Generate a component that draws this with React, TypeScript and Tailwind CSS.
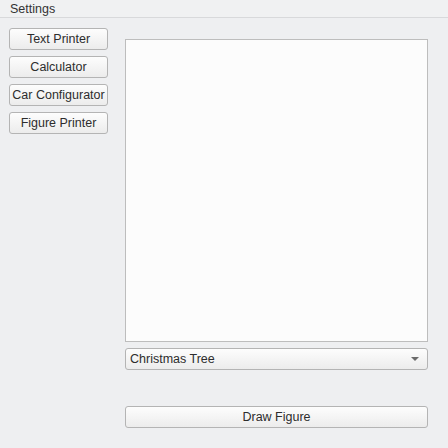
import React from "react";

const btn =
  "h-[22px] rounded-[3px] border border-[#b4b4b4] bg-gradient-to-b from-[#fdfdfd] to-[#ececec] text-[12.5px] text-[#2d2d2d] flex items-center justify-center";

export default function App() {
  return (
    <div className="w-[448px] h-[448px] bg-[#eeeff1] font-['Liberation_Sans',Arial,sans-serif] flex flex-col">
      {/* Title bar */}
      <div className="h-[18px] border-b border-[#d8d9db] bg-[#f0f1f2] px-[10px] text-[12.5px] text-[#333] leading-[18px]">
        Settings
      </div>

      <div className="flex flex-1">
        {/* Left nav */}
        <div className="w-[125px] flex flex-col gap-[6px] pt-[10px] pl-[9px]">
          {["Text Printer", "Calculator", "Car Configurator", "Figure Printer"].map((t) => (
            <button key={t} className={btn + " w-[99px]"}>
              {t}
            </button>
          ))}
        </div>

        {/* Main */}
        <div className="flex flex-col pt-[21px] w-[303px]">
          <div className="h-[303px] border border-[#bdbdbd] bg-[#fcfcfc]" />
          <div className="mt-[6px] h-[22px] rounded-[3px] border border-[#b4b4b4] bg-gradient-to-b from-[#fdfdfd] to-[#ececec] flex items-center justify-between pl-[4px] pr-[8px] text-[12.5px] text-[#2d2d2d]">
            <span>Christmas Tree</span>
            <svg width="8" height="4" viewBox="0 0 8 4">
              <path d="M0 0 H8 L4 4 Z" fill="#6b6b6b" />
            </svg>
          </div>
          <button className={btn + " mt-[36px] w-full"}>Draw Figure</button>
        </div>
      </div>
    </div>
  );
}
